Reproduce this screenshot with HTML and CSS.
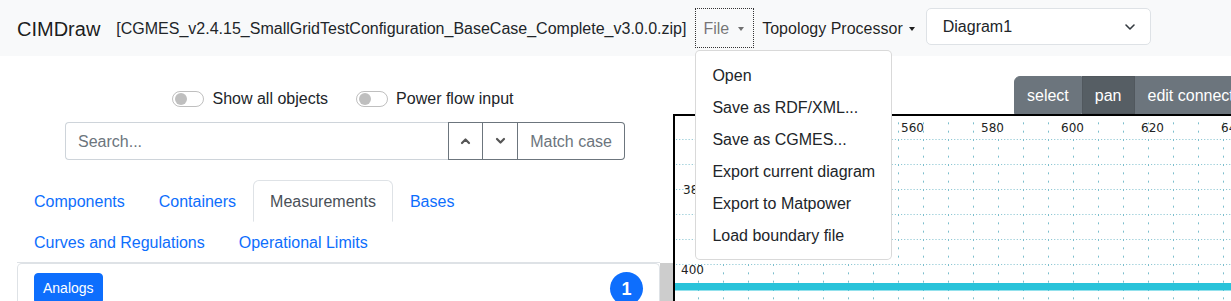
FILE: index.html
```html
<!DOCTYPE html>
<html lang="en">
<head>
    <meta charset="UTF-8">
    <meta name="viewport" content="width=device-width, initial-scale=1.0">
    <title>CIMDraw</title>
    <link rel="stylesheet" href="styles.css">
</head>
<body>
    <nav class="navbar">
        <a class="brand" href="#">CIMDraw</a>
        <span class="navbar-text">[CGMES_v2.4.15_SmallGridTestConfiguration_BaseCase_Complete_v3.0.0.zip]</span>
        <ul class="nav">
            <li class="nav-item dropdown">
                <a class="nav-link toggle file-link" href="#">File</a>
                <ul class="menu">
                    <li><a class="menu-item" href="#">Open</a></li>
                    <li><a class="menu-item" href="#">Save as RDF/XML...</a></li>
                    <li><a class="menu-item" href="#">Save as CGMES...</a></li>
                    <li><a class="menu-item" href="#">Export current diagram</a></li>
                    <li><a class="menu-item" href="#">Export to Matpower</a></li>
                    <li><a class="menu-item" href="#">Load boundary file</a></li>
                </ul>
            </li>
            <li class="nav-item">
                <a class="nav-link toggle topo-link" href="#">Topology Processor</a>
            </li>
            <li class="nav-item">
                <div class="select">
                    <span>Diagram1</span>
                    <svg width="12" height="8" viewBox="0 0 12 8"><path d="M2 2l4 4 4-4" fill="none" stroke="#343a40" stroke-width="1.6" stroke-linecap="round" stroke-linejoin="round"/></svg>
                </div>
            </li>
        </ul>
    </nav>

    <div class="main">
        <div class="sidebar">
            <div class="switches">
                <label class="switch"><span class="track"><span class="knob"></span></span>Show all objects</label>
                <label class="switch"><span class="track"><span class="knob"></span></span>Power flow input</label>
            </div>

            <div class="search">
                <input type="text" placeholder="Search...">
                <button class="btn-outline btn-icon">
                    <svg width="11" height="8" viewBox="0 0 11 8"><path d="M2 6l3.5-3.5L9 6" fill="none" stroke="#555" stroke-width="2.2" stroke-linecap="round" stroke-linejoin="round"/></svg>
                </button>
                <button class="btn-outline btn-icon">
                    <svg width="11" height="8" viewBox="0 0 11 8"><path d="M2 2l3.5 3.5L9 2" fill="none" stroke="#555" stroke-width="2.2" stroke-linecap="round" stroke-linejoin="round"/></svg>
                </button>
                <button class="btn-outline btn-last">Match case</button>
            </div>

            <ul class="tabs">
                <li><a class="tab-link" href="#">Components</a></li>
                <li><a class="tab-link" href="#">Containers</a></li>
                <li><a class="tab-link active" href="#">Measurements</a></li>
                <li><a class="tab-link" href="#">Bases</a></li>
                <li><a class="tab-link" href="#">Curves and Regulations</a></li>
                <li><a class="tab-link" href="#">Operational Limits</a></li>
            </ul>

            <div class="tab-body">
                <div class="card">
                    <div class="card-row">
                        <button class="btn-primary">Analogs</button>
                        <span class="badge">1</span>
                    </div>
                </div>
                <div class="scrollbar"></div>
            </div>
        </div>

        <div class="canvas-col">
            <div class="modes">
                <button class="mode first">select</button>
                <button class="mode active">pan</button>
                <button class="mode">edit connections</button>
                <button class="mode">add</button>
            </div>
            <svg class="diagram" width="600" height="200">
                <defs>
                    <pattern id="grid" x="23" y="23" width="25" height="25" patternUnits="userSpaceOnUse">
                        <line x1="0" y1="0.5" x2="25" y2="0.5" stroke="#5aaec0" stroke-width="1" stroke-dasharray="1 2.125"/>
                        <line x1="0.5" y1="0" x2="0.5" y2="25" stroke="#5aaec0" stroke-width="1" stroke-dasharray="2 6.33"/>
                    </pattern>
                </defs>
                <rect class="grid" x="0" y="0" width="600" height="200" fill="url(#grid)"/>
                <g class="axis">
                    <text x="226" y="16">560</text>
                    <text x="306" y="16">580</text>
                    <text x="386" y="16">600</text>
                    <text x="466" y="16">620</text>
                    <text x="546" y="16">640</text>
                    <text x="8" y="78">380</text>
                    <text x="6" y="158">400</text>
                </g>
                <rect x="0" y="167" width="600" height="7.5" fill="#29c3da"/>
            </svg>
        </div>
    </div>
</body>
</html>
```

FILE: styles.css
```css
body {
    margin: 0;
    font-family: "Liberation Sans", Arial, sans-serif;
    font-size: 16px;
    line-height: 24px;
    color: #212529;
    background-color: #fff;
    overflow: hidden;
}
a {
    text-decoration: none;
}
ul {
    list-style: none;
    margin: 0;
    padding: 0;
}
button {
    font-family: inherit;
}

/* navbar */
.navbar {
    display: flex;
    align-items: center;
    height: 56px;
    box-sizing: border-box;
    padding: 9px 0 7px 17px;
    background-color: #f8f9fa;
    white-space: nowrap;
}
.brand {
    font-size: 20px;
    line-height: 30px;
    color: rgba(0, 0, 0, 0.9);
    margin-right: 16px;
}
.navbar-text {
    color: #212529;
    margin-right: 9px;
}
.nav {
    display: flex;
    align-items: flex-start;
    height: 40px;
    margin-top: -2px;
}
.nav-item {
    position: relative;
}
.nav-link {
    display: block;
    padding: 9px 8px 7px;
}
.toggle::after {
    content: "";
    display: inline-block;
    margin-left: 6px;
    vertical-align: 3px;
    border-top: 4px solid;
    border-left: 3.5px solid transparent;
    border-right: 3.5px solid transparent;
}
.file-link {
    color: rgba(0, 0, 0, 0.55);
    padding-right: 10px;
    outline: 1px dotted #333;
    outline-offset: -1px;
}
.file-link::after {
    margin-left: 9px;
}
.topo-link {
    color: rgba(0, 0, 0, 0.88);
    padding-right: 10px;
}
.select {
    display: flex;
    align-items: center;
    justify-content: space-between;
    width: 225px;
    height: 37px;
    box-sizing: border-box;
    margin-left: 1px;
    padding: 1px 14px 0 16px;
    background-color: #fff;
    border: 1px solid #dee2e6;
    border-radius: 5px;
}
.menu {
    position: absolute;
    top: 42px;
    left: 0;
    z-index: 10;
    padding: 9px 0 7px;
    background-color: #fff;
    border: 1px solid rgba(0, 0, 0, 0.15);
    border-radius: 5px;
}
.menu-item {
    display: block;
    padding: 4px 16px;
    color: #212529;
}

/* main layout */
.main {
    display: flex;
}
.sidebar {
    width: 673px;
    flex-shrink: 0;
    box-sizing: border-box;
    padding: 31px 0 0 17px;
}
.switches {
    display: flex;
    justify-content: center;
    gap: 28px;
    padding-right: 4px;
}
.switch {
    display: flex;
    align-items: center;
    gap: 8px;
}
.track {
    display: flex;
    align-items: center;
    width: 32px;
    height: 16px;
    box-sizing: border-box;
    padding-left: 2px;
    border: 1px solid rgba(0, 0, 0, 0.25);
    border-radius: 8px;
}
.knob {
    width: 12px;
    height: 12px;
    border-radius: 50%;
    background-color: #bfbfbf;
}
.search {
    display: flex;
    width: 560px;
    margin: 11px auto 0;
}
.search input {
    flex: 1;
    min-width: 0;
    height: 38px;
    box-sizing: border-box;
    padding: 7px 12px 5px;
    font-family: inherit;
    font-size: 16px;
    border: 1px solid #ced4da;
    border-right: none;
    border-radius: 4px 0 0 4px;
}
.search input::placeholder {
    color: #6c757d;
}
.btn-outline {
    height: 38px;
    padding: 7px 12px 5px;
    font-size: 16px;
    line-height: 24px;
    color: #6c757d;
    background-color: #fff;
    border: 1px solid #6c757d;
}
.btn-outline + .btn-outline {
    border-left: none;
}
.btn-icon {
    display: flex;
    align-items: center;
    justify-content: center;
    width: 35px;
    padding: 0;
}
.btn-last {
    border-radius: 0 4px 4px 0;
}

/* tabs */
.tabs {
    display: flex;
    flex-wrap: wrap;
    margin: 20px 13px 0 0;
    border-bottom: 1px solid #dee2e6;
}
.tab-link {
    display: block;
    margin-bottom: -1px;
    padding: 9px 16px 7px;
    color: #0d6efd;
    border: 1px solid transparent;
    border-radius: 6px 6px 0 0;
}
.tab-link.active {
    color: #495057;
    background-color: #fff;
    border-color: #dee2e6 #dee2e6 #fff;
}
.tab-body {
    display: flex;
    height: 60px;
}
.card {
    flex: 1;
    border: 1px solid #dee2e6;
    border-bottom: none;
    border-radius: 5px 5px 0 0;
}
.card-row {
    display: flex;
    align-items: center;
    justify-content: space-between;
    padding: 8px 16px;
}
.btn-primary {
    padding: 4px 8px;
    font-size: 14px;
    line-height: 21px;
    color: #fff;
    background-color: #0d6efd;
    border: 1px solid #0d6efd;
    border-radius: 4px;
}
.badge {
    display: flex;
    align-items: center;
    justify-content: center;
    width: 33px;
    height: 33px;
    border-radius: 50%;
    background-color: #0d6efd;
    color: #fff;
    font-size: 18px;
    font-weight: bold;
}
.scrollbar {
    width: 13px;
    background-color: #cdcdcd;
}

/* diagram */
.canvas-col {
    flex: 1;
    min-width: 0;
    overflow: hidden;
}
.modes {
    display: flex;
    margin-top: 20px;
    padding-left: 341px;
    white-space: nowrap;
}
.mode {
    flex-shrink: 0;
    height: 38px;
    padding: 7px 12px 5px;
    font-size: 16px;
    line-height: 24px;
    color: #fff;
    background-color: #6c757d;
    border: 1px solid #6c757d;
}
.mode.first {
    border-radius: 6px 0 0 0;
}
.mode.active {
    background-color: #565e64;
    border-color: #51585e;
}
.diagram {
    display: block;
    border-left: 2px solid #000;
    border-top: 2px solid #000;
}
.grid {
    opacity: 0.8;
}
.axis text {
    font-family: "DejaVu Sans", sans-serif;
    font-size: 12px;
    fill: #222;
}
```
